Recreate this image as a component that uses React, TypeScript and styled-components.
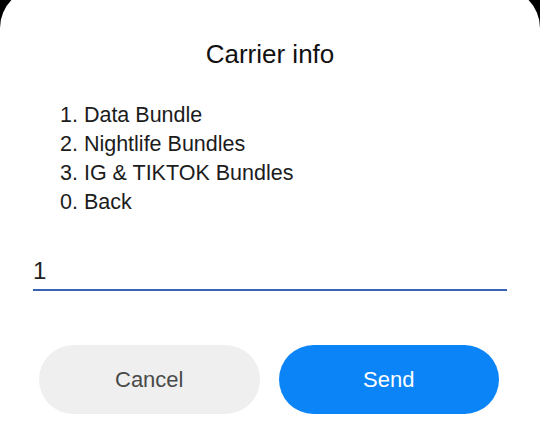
import React from 'react';
import styled, { createGlobalStyle } from 'styled-components';

const GlobalStyle = createGlobalStyle`
  html, body {
    margin: 0;
    padding: 0;
    background: #000;
    overflow: hidden;
  }
  body {
    font-family: "Liberation Sans", Arial, sans-serif;
  }
`;

const Screen = styled.div`
  width: 540px;
  height: 443px;
  background: #000;
  overflow: hidden;
`;

const Dialog = styled.div`
  margin-top: -12px;
  height: 455px;
  background: #fff;
  border-radius: 40px 40px 0 0;
  padding-top: 51px;
  box-sizing: border-box;
  display: flex;
  flex-direction: column;
`;

const Title = styled.h1`
  margin: 0;
  font-size: 26px;
  line-height: 30px;
  font-weight: 400;
  text-align: center;
  color: #111;
`;

const Menu = styled.div`
  margin: 32px 0 0;
  padding-left: 60px;
  font-size: 21.5px;
  line-height: 29px;
  color: #1c1c1c;
`;

const MenuLine = styled.div``;

const InputRow = styled.div`
  margin: 39px 33px 0;
  padding-bottom: 3px;
  border-bottom: 2px solid #3a62b6;
  font-size: 24px;
  line-height: 30px;
  color: #222;
`;

const Actions = styled.div`
  display: flex;
  gap: 19px;
  margin: 54px 41px 0 39px;
`;

const Button = styled.button<{ $primary?: boolean }>`
  flex: 1;
  height: 69px;
  border: none;
  border-radius: 35px;
  font-family: "Liberation Sans", Arial, sans-serif;
  font-size: 22px;
  background: ${p => (p.$primary ? '#0b84f7' : '#efefef')};
  color: ${p => (p.$primary ? '#fff' : '#4a4a4a')};
  padding: 0;
`;

const items = [
  '1. Data Bundle',
  '2. Nightlife Bundles',
  '3. IG & TIKTOK Bundles',
  '0. Back',
];

const App = () => {
  return (
    <Screen>
      <GlobalStyle />
      <Dialog>
        <Title>Carrier info</Title>
        <Menu>
          {items.map(item => (
            <MenuLine key={item}>{item}</MenuLine>
          ))}
        </Menu>
        <InputRow>1</InputRow>
        <Actions>
          <Button>Cancel</Button>
          <Button $primary>Send</Button>
        </Actions>
      </Dialog>
    </Screen>
  );
};

export default App;
